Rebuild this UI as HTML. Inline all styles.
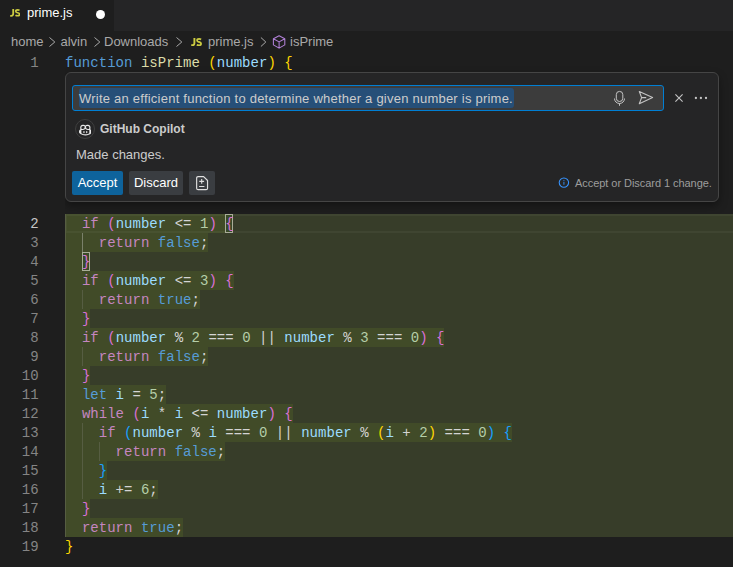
<!DOCTYPE html>
<html><head><meta charset="utf-8">
<style>
*{margin:0;padding:0;box-sizing:border-box}
html,body{width:733px;height:567px;overflow:hidden;background:#1e1e1e}
body{position:relative;font-family:"Liberation Sans",sans-serif;-webkit-font-smoothing:antialiased}
.abs{position:absolute}
#tabbar{position:absolute;left:0;top:0;width:733px;height:31px;background:#252526}
#tab{position:absolute;left:0;top:0;width:114px;height:31px;background:#1e1e1e}
.jsi{position:absolute;font-family:"Liberation Sans",sans-serif;font-weight:bold;font-size:9px;color:#cbcb41;letter-spacing:0px}
#tabname{position:absolute;left:27px;top:5px;font-size:13px;color:#ffffff;line-height:16px}
#dot{position:absolute;left:95.5px;top:9.5px;width:9px;height:9px;border-radius:50%;background:#ffffff}
#bc{position:absolute;left:0;top:31px;width:733px;height:22px;font-size:13px;color:#a9a9a9;line-height:22px}
#bc span{position:absolute;top:0}
.chev{position:absolute;top:5px}
.ln{position:absolute;left:0;width:38.6px;height:19px;padding-top:1px;text-align:right;font-family:"Liberation Mono",monospace;font-size:14px;line-height:19px;color:#858585}
.ln.act{color:#c6c6c6}
.cl{position:absolute;left:65px;height:19px;padding-top:1px;white-space:pre;font-family:"Liberation Mono",monospace;font-size:14px;line-height:19px;letter-spacing:0.03px}
#green{position:absolute;left:65px;top:214px;width:668px;height:323px;background:#373d29}
#curline{position:absolute;left:65px;top:214px;width:680px;height:19px;border:2px solid #3f4531}
.hl{position:absolute;left:65px;height:19px;background:rgba(156,204,44,0.1)}
.g{position:absolute;width:1px;background:#565d42}
.g.ga{background:#7a806a}
.bm{position:absolute;border:1px solid #a9ad98;height:19px;background:#3a4a29}
#wclip{position:absolute;left:65px;top:53px;width:668px;height:161px;overflow:hidden}
#widget{position:absolute;left:0px;top:19px;width:654px;height:130px;background:#252526;border:1px solid #454545;border-radius:6px;box-shadow:0 4px 8px rgba(0,0,0,0.36)}
#input{position:absolute;left:72px;top:85px;width:592px;height:26px;background:#3c3c3c;border:1px solid #007fd4;border-radius:3px}
#sel{position:absolute;left:79px;top:88px;width:434.5px;height:20px;background:#264f78;border-radius:3px}
#intext{position:absolute;left:79px;top:89px;height:20px;line-height:20px;font-size:13px;letter-spacing:0.23px;color:#cccccc;white-space:pre}
#avatar{position:absolute;left:75px;top:119px;width:20px;height:20px;border-radius:50%;border:1px solid #3f3f3f}
#gh{position:absolute;left:100px;top:121px;font-size:12px;font-weight:bold;color:#cccccc;line-height:16px}
#made{position:absolute;left:76px;top:147px;font-size:13px;color:#cccccc;line-height:16px}
.btn{position:absolute;top:171px;height:24px;border-radius:2px;font-size:13px;line-height:24px;color:#ffffff;text-align:center}
#info{position:absolute;left:575px;top:175px;font-size:11px;letter-spacing:-0.05px;color:#9d9d9d;line-height:16px;white-space:pre}
</style></head><body>
<div id="tabbar"></div>
<div id="tab"></div>
<svg class="abs" style="left:9.8px;top:9.3px" width="10.4" height="7.6" viewBox="0 0 11 8.2" preserveAspectRatio="none"><path d="M3.4 0 V5.2 Q3.4 7.3 1.4 7.3 H0.2" fill="none" stroke="#cbcb41" stroke-width="1.9"/><path d="M10.1 1.5 Q9.3 0.9 8.1 0.9 Q6.1 0.9 6.1 2.4 Q6.1 3.6 8.1 4 Q10.1 4.4 10.1 5.8 Q10.1 7.3 8.1 7.3 Q6.7 7.3 5.8 6.7" fill="none" stroke="#cbcb41" stroke-width="1.8"/></svg>
<div id="tabname">prime.js</div>
<div id="dot"></div>

<div id="bc">
<span style="left:11px">home</span>
<svg class="chev" style="left:48px" width="10" height="12" viewBox="0 0 10 12"><path d="M1.5 1.5 L6.8 6 L1.5 10.5" fill="none" stroke="#a9a9a9" stroke-width="1"/></svg>
<span style="left:60.5px">alvin</span>
<svg class="chev" style="left:93px" width="10" height="12" viewBox="0 0 10 12"><path d="M1.5 1.5 L6.8 6 L1.5 10.5" fill="none" stroke="#a9a9a9" stroke-width="1"/></svg>
<span style="left:104px">Downloads</span>
<svg class="chev" style="left:175px" width="10" height="12" viewBox="0 0 10 12"><path d="M1.5 1.5 L6.8 6 L1.5 10.5" fill="none" stroke="#a9a9a9" stroke-width="1"/></svg>
<svg class="abs" style="left:190.5px;top:6.9px" width="11" height="8.2" viewBox="0 0 11 8.2"><path d="M3.4 0 V5.2 Q3.4 7.3 1.4 7.3 H0.2" fill="none" stroke="#cbcb41" stroke-width="1.9"/><path d="M10.1 1.5 Q9.3 0.9 8.1 0.9 Q6.1 0.9 6.1 2.4 Q6.1 3.6 8.1 4 Q10.1 4.4 10.1 5.8 Q10.1 7.3 8.1 7.3 Q6.7 7.3 5.8 6.7" fill="none" stroke="#cbcb41" stroke-width="1.8"/></svg>
<span style="left:208px">prime.js</span>
<svg class="chev" style="left:259px" width="10" height="12" viewBox="0 0 10 12"><path d="M1.9 1.5 L6.8 6 L1.9 10.5" fill="none" stroke="#a9a9a9" stroke-width="1"/></svg>
<svg class="abs" style="left:271px;top:3px" width="16" height="16" viewBox="0 0 16 16"><path d="M8.1 1.8 L13.8 4.7 L13.8 10.9 L8.1 14.1 L2.4 10.9 L2.4 4.7 Z M2.4 4.7 L8.1 7.9 L13.8 4.7 M8.1 7.9 L8.1 14.1" fill="none" stroke="#b180d7" stroke-width="1.05" stroke-linejoin="round"/></svg>
<span style="left:290px">isPrime</span>
</div>

<div id="green"></div>
<div id="curline"></div>
<div class="hl" style="top:214px;width:160.17px"></div>
<div class="hl" style="top:233px;width:143.31px"></div>
<div class="hl" style="top:252px;width:16.86px"></div>
<div class="hl" style="top:271px;width:168.60px"></div>
<div class="hl" style="top:290px;width:134.88px"></div>
<div class="hl" style="top:309px;width:25.29px"></div>
<div class="hl" style="top:328px;width:379.35px"></div>
<div class="hl" style="top:347px;width:143.31px"></div>
<div class="hl" style="top:366px;width:25.29px"></div>
<div class="hl" style="top:385px;width:101.16px"></div>
<div class="hl" style="top:404px;width:227.61px"></div>
<div class="hl" style="top:423px;width:446.79px"></div>
<div class="hl" style="top:442px;width:160.17px"></div>
<div class="hl" style="top:461px;width:42.15px"></div>
<div class="hl" style="top:480px;width:92.73px"></div>
<div class="hl" style="top:499px;width:25.29px"></div>
<div class="hl" style="top:518px;width:118.02px"></div>
<div class="g" style="left:65.0px;top:214px;height:323px"></div>
<div class="g ga" style="left:81.9px;top:233px;height:19px"></div>
<div class="g" style="left:81.9px;top:290px;height:19px"></div>
<div class="g" style="left:81.9px;top:347px;height:19px"></div>
<div class="g" style="left:81.9px;top:423px;height:76px"></div>
<div class="g" style="left:98.7px;top:442px;height:19px"></div>
<div class="bm" style="left:225px;top:214px;width:8px"></div>
<div class="bm" style="left:82px;top:252px;width:8px"></div>
<div class="ln" style="top:53px">1</div>
<div class="cl" style="top:53px"><span style="color:#569cd6">function</span><span style="color:#d4d4d4"> </span><span style="color:#dcdcaa">isPrime</span><span style="color:#d4d4d4"> </span><span style="color:#ffd700">(</span><span style="color:#9cdcfe">number</span><span style="color:#ffd700">)</span><span style="color:#d4d4d4"> </span><span style="color:#ffd700">{</span></div>
<div class="ln act" style="top:214px">2</div>
<div class="cl" style="top:214px"><span style="color:#d4d4d4">  </span><span style="color:#c586c0">if</span><span style="color:#d4d4d4"> </span><span style="color:#da70d6">(</span><span style="color:#9cdcfe">number</span><span style="color:#d4d4d4"> &lt;= </span><span style="color:#b5cea8">1</span><span style="color:#da70d6">)</span><span style="color:#d4d4d4"> </span><span style="color:#da70d6">{</span></div>
<div class="ln" style="top:233px">3</div>
<div class="cl" style="top:233px"><span style="color:#d4d4d4">    </span><span style="color:#c586c0">return</span><span style="color:#d4d4d4"> </span><span style="color:#569cd6">false</span><span style="color:#d4d4d4">;</span></div>
<div class="ln" style="top:252px">4</div>
<div class="cl" style="top:252px"><span style="color:#d4d4d4">  </span><span style="color:#da70d6">}</span></div>
<div class="ln" style="top:271px">5</div>
<div class="cl" style="top:271px"><span style="color:#d4d4d4">  </span><span style="color:#c586c0">if</span><span style="color:#d4d4d4"> </span><span style="color:#da70d6">(</span><span style="color:#9cdcfe">number</span><span style="color:#d4d4d4"> &lt;= </span><span style="color:#b5cea8">3</span><span style="color:#da70d6">)</span><span style="color:#d4d4d4"> </span><span style="color:#da70d6">{</span></div>
<div class="ln" style="top:290px">6</div>
<div class="cl" style="top:290px"><span style="color:#d4d4d4">    </span><span style="color:#c586c0">return</span><span style="color:#d4d4d4"> </span><span style="color:#569cd6">true</span><span style="color:#d4d4d4">;</span></div>
<div class="ln" style="top:309px">7</div>
<div class="cl" style="top:309px"><span style="color:#d4d4d4">  </span><span style="color:#da70d6">}</span></div>
<div class="ln" style="top:328px">8</div>
<div class="cl" style="top:328px"><span style="color:#d4d4d4">  </span><span style="color:#c586c0">if</span><span style="color:#d4d4d4"> </span><span style="color:#da70d6">(</span><span style="color:#9cdcfe">number</span><span style="color:#d4d4d4"> % </span><span style="color:#b5cea8">2</span><span style="color:#d4d4d4"> === </span><span style="color:#b5cea8">0</span><span style="color:#d4d4d4"> || </span><span style="color:#9cdcfe">number</span><span style="color:#d4d4d4"> % </span><span style="color:#b5cea8">3</span><span style="color:#d4d4d4"> === </span><span style="color:#b5cea8">0</span><span style="color:#da70d6">)</span><span style="color:#d4d4d4"> </span><span style="color:#da70d6">{</span></div>
<div class="ln" style="top:347px">9</div>
<div class="cl" style="top:347px"><span style="color:#d4d4d4">    </span><span style="color:#c586c0">return</span><span style="color:#d4d4d4"> </span><span style="color:#569cd6">false</span><span style="color:#d4d4d4">;</span></div>
<div class="ln" style="top:366px">10</div>
<div class="cl" style="top:366px"><span style="color:#d4d4d4">  </span><span style="color:#da70d6">}</span></div>
<div class="ln" style="top:385px">11</div>
<div class="cl" style="top:385px"><span style="color:#d4d4d4">  </span><span style="color:#569cd6">let</span><span style="color:#d4d4d4"> </span><span style="color:#9cdcfe">i</span><span style="color:#d4d4d4"> = </span><span style="color:#b5cea8">5</span><span style="color:#d4d4d4">;</span></div>
<div class="ln" style="top:404px">12</div>
<div class="cl" style="top:404px"><span style="color:#d4d4d4">  </span><span style="color:#c586c0">while</span><span style="color:#d4d4d4"> </span><span style="color:#da70d6">(</span><span style="color:#9cdcfe">i</span><span style="color:#d4d4d4"> * </span><span style="color:#9cdcfe">i</span><span style="color:#d4d4d4"> &lt;= </span><span style="color:#9cdcfe">number</span><span style="color:#da70d6">)</span><span style="color:#d4d4d4"> </span><span style="color:#da70d6">{</span></div>
<div class="ln" style="top:423px">13</div>
<div class="cl" style="top:423px"><span style="color:#d4d4d4">    </span><span style="color:#c586c0">if</span><span style="color:#d4d4d4"> </span><span style="color:#179fff">(</span><span style="color:#9cdcfe">number</span><span style="color:#d4d4d4"> % </span><span style="color:#9cdcfe">i</span><span style="color:#d4d4d4"> === </span><span style="color:#b5cea8">0</span><span style="color:#d4d4d4"> || </span><span style="color:#9cdcfe">number</span><span style="color:#d4d4d4"> % </span><span style="color:#ffd700">(</span><span style="color:#9cdcfe">i</span><span style="color:#d4d4d4"> + </span><span style="color:#b5cea8">2</span><span style="color:#ffd700">)</span><span style="color:#d4d4d4"> === </span><span style="color:#b5cea8">0</span><span style="color:#179fff">)</span><span style="color:#d4d4d4"> </span><span style="color:#179fff">{</span></div>
<div class="ln" style="top:442px">14</div>
<div class="cl" style="top:442px"><span style="color:#d4d4d4">      </span><span style="color:#c586c0">return</span><span style="color:#d4d4d4"> </span><span style="color:#569cd6">false</span><span style="color:#d4d4d4">;</span></div>
<div class="ln" style="top:461px">15</div>
<div class="cl" style="top:461px"><span style="color:#d4d4d4">    </span><span style="color:#179fff">}</span></div>
<div class="ln" style="top:480px">16</div>
<div class="cl" style="top:480px"><span style="color:#d4d4d4">    </span><span style="color:#9cdcfe">i</span><span style="color:#d4d4d4"> += </span><span style="color:#b5cea8">6</span><span style="color:#d4d4d4">;</span></div>
<div class="ln" style="top:499px">17</div>
<div class="cl" style="top:499px"><span style="color:#d4d4d4">  </span><span style="color:#da70d6">}</span></div>
<div class="ln" style="top:518px">18</div>
<div class="cl" style="top:518px"><span style="color:#d4d4d4">  </span><span style="color:#c586c0">return</span><span style="color:#d4d4d4"> </span><span style="color:#569cd6">true</span><span style="color:#d4d4d4">;</span></div>
<div class="ln" style="top:537px">19</div>
<div class="cl" style="top:537px"><span style="color:#ffd700">}</span></div>

<div id="wclip"><div id="widget"></div></div>
<div id="input"></div>
<div id="sel"></div>
<div id="intext">Write an efficient function to determine whether a given number is prime.</div>
<svg class="abs" style="left:611px;top:89px" width="18" height="18" viewBox="0 0 18 18"><rect x="5.3" y="2.4" width="6.5" height="10.1" rx="3.25" fill="none" stroke="#c5c5c5" stroke-width="1"/><path d="M3.5 9.5 A5 5 0 0 0 13.5 9.5 M8.5 14.5 L8.5 16.8" fill="none" stroke="#c5c5c5" stroke-width="1"/></svg>
<svg class="abs" style="left:637px;top:89px" width="18" height="18" viewBox="0 0 18 18"><path d="M2.3 2.5 L15.6 8.6 L2.3 14.7 L4.6 8.6 Z M4.6 8.6 L9.2 8.6" fill="none" stroke="#c5c5c5" stroke-width="1.1" stroke-linejoin="round"/></svg>
<svg class="abs" style="left:673px;top:92px" width="12" height="12" viewBox="0 0 12 12"><path d="M2.4 2.4 L9.6 9.6 M9.6 2.4 L2.4 9.6" stroke="#c5c5c5" stroke-width="1.1"/></svg>
<svg class="abs" style="left:693px;top:94px" width="16" height="8" viewBox="0 0 16 8"><circle cx="2.9" cy="4" r="1.15" fill="#c5c5c5"/><circle cx="7.9" cy="4" r="1.15" fill="#c5c5c5"/><circle cx="13" cy="4" r="1.15" fill="#c5c5c5"/></svg>

<div id="avatar"></div>
<svg class="abs" style="left:78.6px;top:123.8px" width="12.7" height="12.2" viewBox="0 0 16 16" preserveAspectRatio="none"><path fill="#e8e8e8" d="M7.998 15.035c-4.562 0-7.873-2.914-7.998-3.749V9.338c.085-.628.677-1.686 1.588-2.065.013-.07.024-.143.036-.218.029-.183.06-.384.126-.612-.201-.508-.254-1.084-.254-1.656 0-.87.128-1.769.693-2.484.579-.733 1.494-1.124 2.724-1.261 1.206-.134 2.262.034 2.944.765.05.053.096.108.139.165.044-.057.094-.112.143-.165.682-.731 1.738-.899 2.944-.765 1.23.137 2.145.528 2.724 1.261.566.715.693 1.614.693 2.484 0 .572-.053 1.148-.254 1.656.066.228.098.429.126.612.012.076.024.148.037.218.924.385 1.522 1.471 1.591 2.095v1.872c0 .766-3.351 3.795-8.002 3.795Zm0-1.485c2.28 0 4.584-1.110 5.002-1.433V7.862l-.023-.116c-.49.21-1.075.291-1.727.291-1.146 0-2.059-.327-2.71-.991A3.222 3.222 0 0 1 8 6.303a3.240 3.240 0 0 1-.544.743c-.65.664-1.563.991-2.71.991-.652 0-1.236-.081-1.727-.291l-.023.116v4.255c.419.323 2.722 1.433 5.002 1.433ZM6.762 2.830c-.193-.206-.637-.413-1.682-.297-1.019.113-1.479.404-1.713.7-.247.312-.369.789-.369 1.554 0 .793.129 1.171.308 1.371.162.181.519.379 1.442.379.853 0 1.339-.235 1.638-.54.315-.322.527-.827.617-1.553.117-.935-.037-1.395-.241-1.614Zm4.155-.297c-1.044-.116-1.488.091-1.681.297-.204.219-.359.679-.242 1.614.091.726.303 1.231.618 1.553.299.305.784.54 1.638.54.922 0 1.280-.198 1.442-.379.179-.2.308-.578.308-1.371 0-.765-.123-1.242-.37-1.554-.233-.296-.693-.587-1.713-.7Z"/><path fill="#e8e8e8" d="M6.25 9.037a.75.75 0 0 1 .75.75v1.501a.75.75 0 0 1-1.5 0V9.787a.75.75 0 0 1 .75-.75Zm4.25.75v1.501a.75.75 0 0 1-1.5 0V9.787a.75.75 0 0 1 1.5 0Z"/></svg>
<div id="gh">GitHub Copilot</div>
<div id="made">Made changes.</div>
<div class="btn" style="left:72px;width:51px;background:#0e639c">Accept</div>
<div class="btn" style="left:129px;width:54px;background:#3a3d41">Discard</div>
<div class="btn" style="left:189px;width:26px;background:#3a3d41"></div>
<svg class="abs" style="left:194px;top:175px" width="16" height="16" viewBox="0 0 16 16"><path d="M2.65 3 Q2.65 1.55 4.1 1.55 L9.6 1.55 L13.55 5.5 L13.55 13.2 Q13.55 14.65 12.1 14.65 L4.1 14.65 Q2.65 14.65 2.65 13.2 Z" fill="none" stroke="#e0e0e0" stroke-width="1.15" stroke-linejoin="round"/><path d="M7.7 4 L7.7 8.8 M5.3 6.4 L10.1 6.4 M5.1 11.5 L10.4 11.5" stroke="#e0e0e0" stroke-width="1.1"/></svg>
<svg class="abs" style="left:557px;top:176px" width="13" height="13" viewBox="0 0 13 13"><circle cx="6.9" cy="6.6" r="4.7" fill="none" stroke="#3794ff" stroke-width="1.05"/><path d="M6.9 5.9 L6.9 8.8" stroke="#2f80dd" stroke-width="1.1"/><circle cx="6.9" cy="4.7" r="0.6" fill="#2f80dd"/></svg>
<div id="info">Accept or Discard 1 change.</div>
</body></html>
